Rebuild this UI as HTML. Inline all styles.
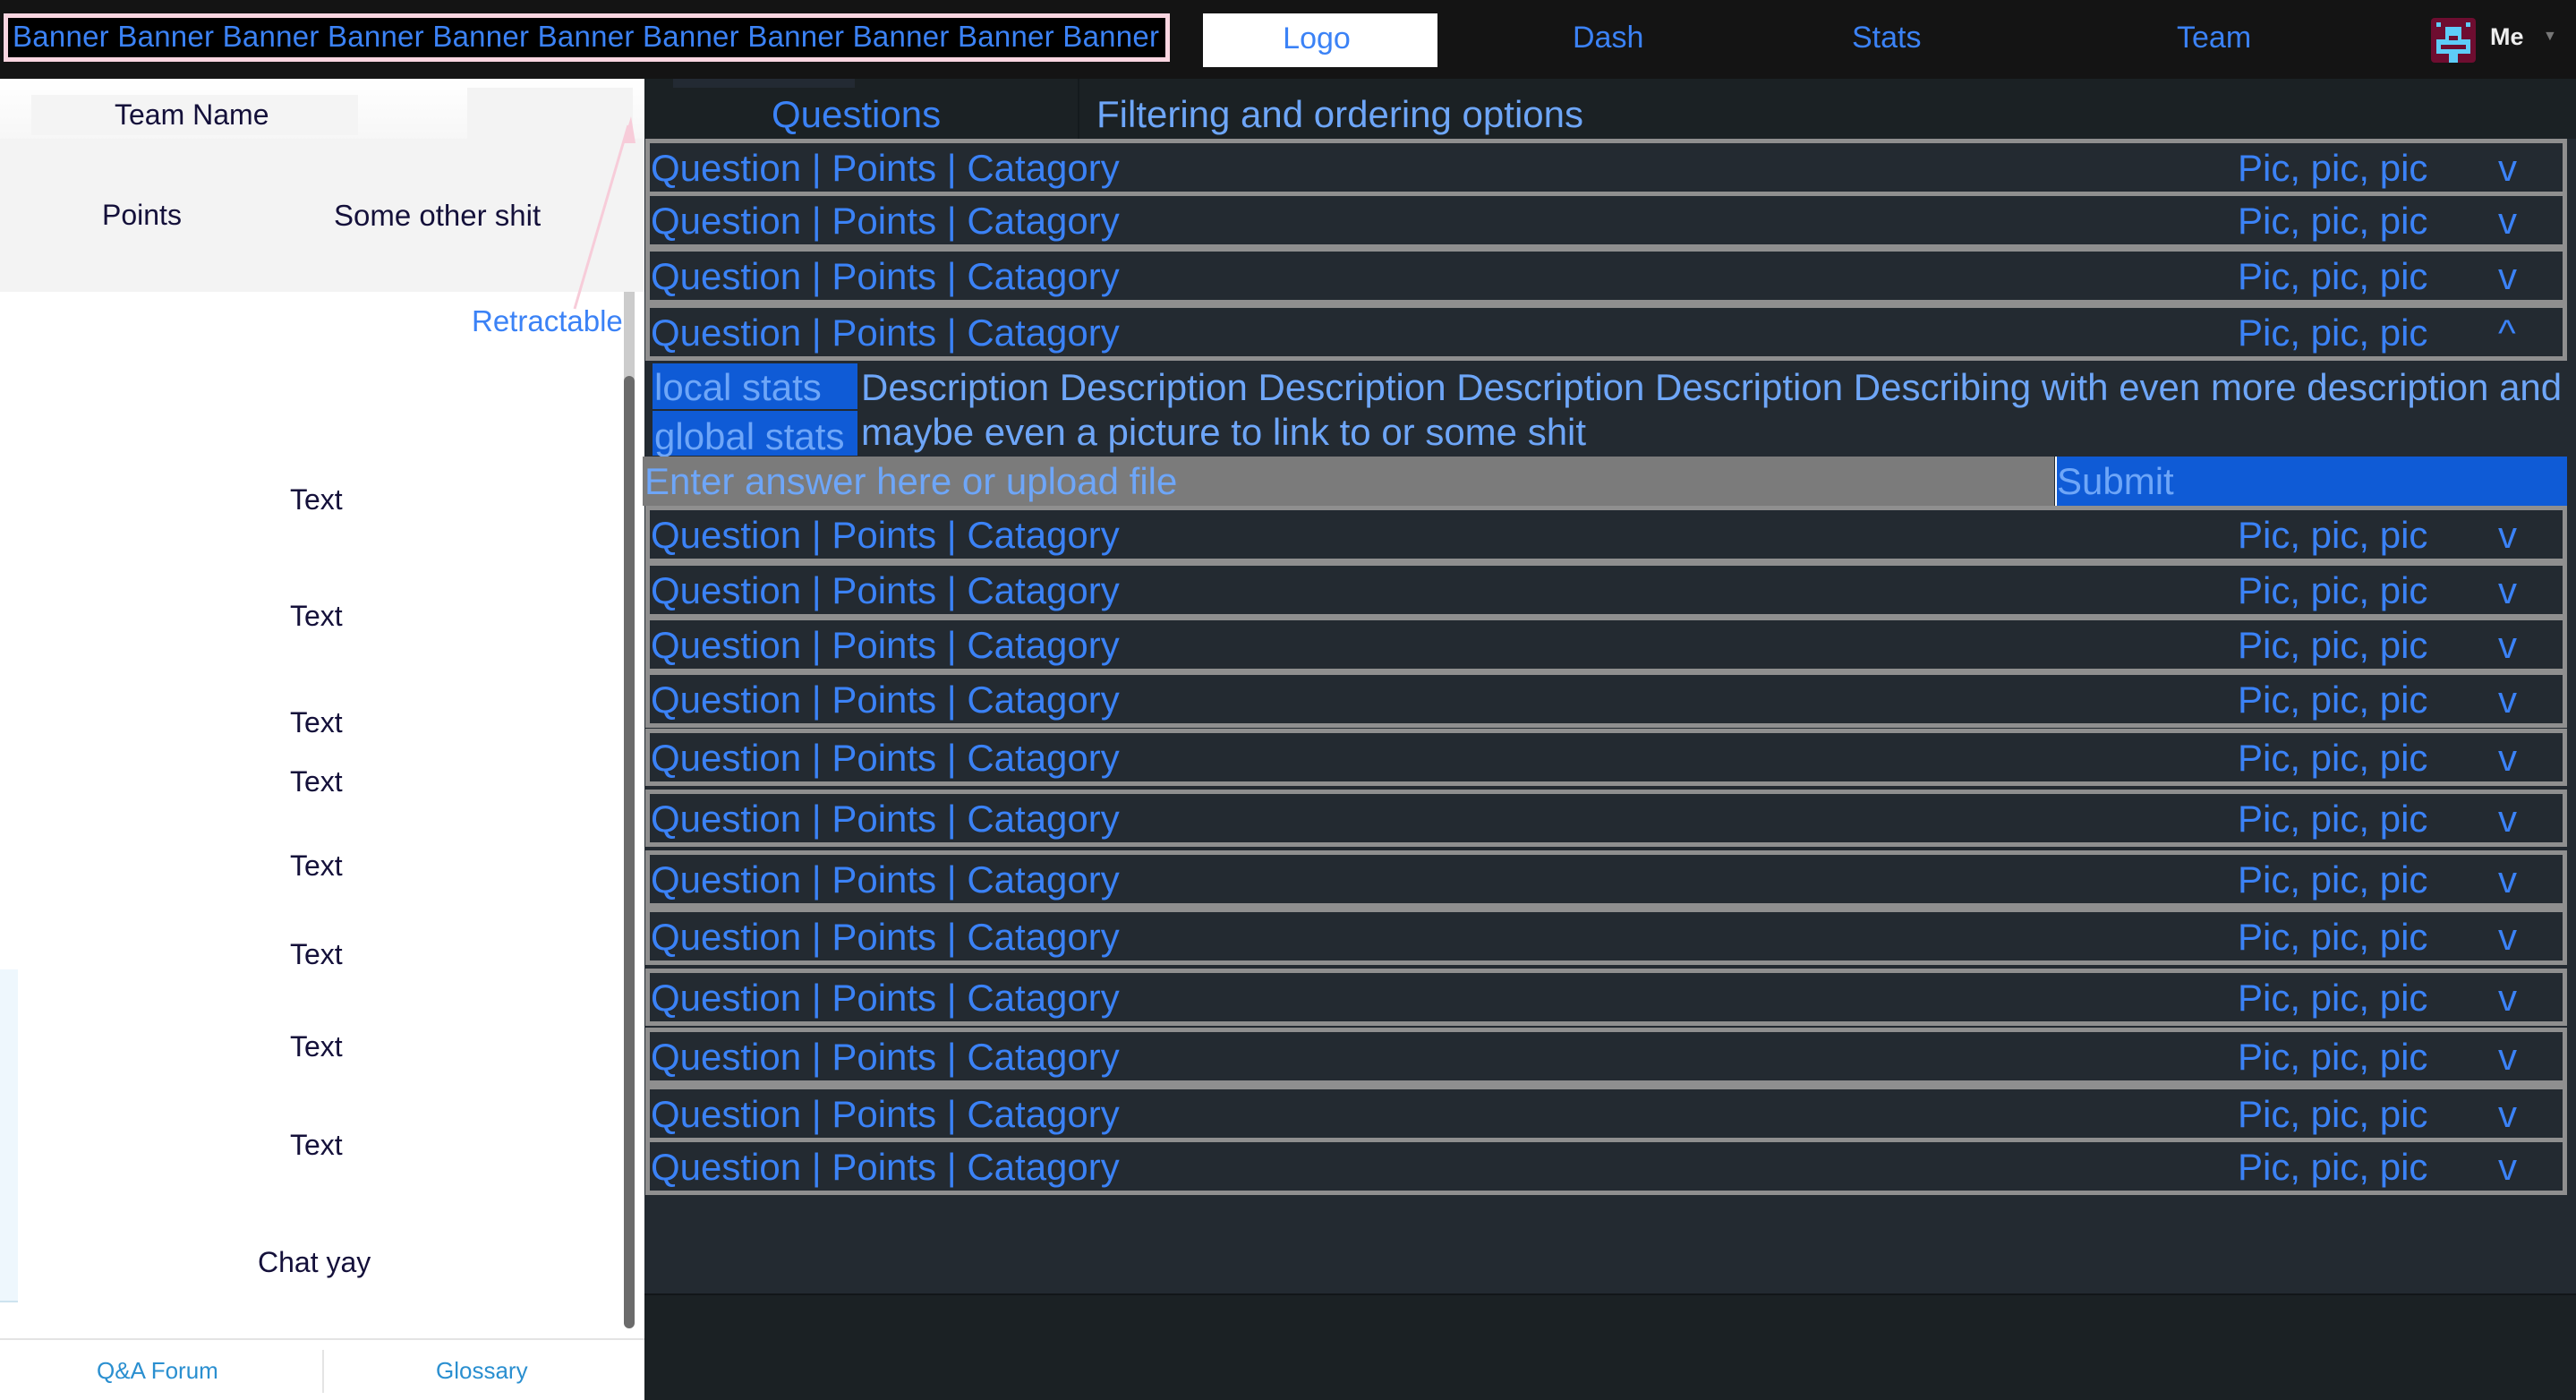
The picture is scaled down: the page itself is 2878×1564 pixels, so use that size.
<!DOCTYPE html>
<html><head><meta charset="utf-8"><style>
*{margin:0;padding:0;box-sizing:border-box}
body{width:2878px;height:1564px;overflow:hidden;background:#1b2124;font-family:"Liberation Sans",sans-serif;position:relative}
.a{position:absolute;white-space:nowrap}
.top{left:0;top:0;width:2878px;height:88px;background:#141414}
.nav{color:#3b82f6;font-size:34px;top:23px}
.left{left:0;top:88px;width:720px;height:1476px;background:#fff}
.dk{color:#14103a;font-size:32px}
.row{position:absolute;left:721px;width:2147px;height:64px;border:5px solid #8f8f8f;background:#232a31;color:#3b82f6;font-size:42px}
.row .q{position:absolute;left:1px;top:4px}
.row .p{position:absolute;left:1774px;top:4px}
.row .v{position:absolute;left:2065px;top:4px}
.lt{color:#6ea6f8;font-size:42px}
</style></head><body>
<div class="a top"></div>
<div class="a" style="left:4px;top:15px;width:1303px;height:54px;border:5px solid #f9d5e0;background:#000;color:#3b82f6;font-size:33px;letter-spacing:0.25px;line-height:42px;padding-left:5px;overflow:hidden">Banner Banner Banner Banner Banner Banner Banner Banner Banner Banner Banner</div>
<div class="a" style="left:1344px;top:15px;width:262px;height:60px;background:#fff;color:#3b82f6;font-size:34px;text-align:center;line-height:56px;padding-right:8px">Logo</div>
<div class="a nav" style="left:1757px">Dash</div>
<div class="a nav" style="left:2069px">Stats</div>
<div class="a nav" style="left:2432px">Team</div>
<svg class="a" style="left:2716px;top:20px" width="50" height="50" viewBox="0 0 50 50"><rect width="50" height="50" rx="4" fill="#6e0d30"/><rect x="6" y="5" width="5" height="5" fill="#5ecdf8"/><rect x="39" y="5" width="5" height="5" fill="#5ecdf8"/><rect x="16" y="10" width="18" height="14" fill="#5ecdf8"/><rect x="6" y="24" width="38" height="16" fill="#5ecdf8"/><rect x="20" y="40" width="10" height="10" fill="#5ecdf8"/><rect x="20" y="20" width="10" height="5" fill="#6e0d30"/><rect x="11" y="30" width="28" height="5" fill="#6e0d30"/></svg>
<div class="a" style="left:2782px;top:26px;color:#eee;font-weight:bold;font-size:27px">Me</div>
<div class="a" style="left:2841px;top:32px;color:#777;font-size:16px">▼</div>

<div class="a left"></div>
<div class="a" style="left:0;top:88px;width:720px;height:238px;background:linear-gradient(#fff,#f3f3f3 40%)"></div>
<div class="a" style="left:35px;top:106px;width:365px;height:45px;background:#f4f4f4"></div>
<div class="a" style="left:522px;top:98px;width:185px;height:57px;background:#f3f3f3"></div>
<div class="a" style="left:0;top:155px;width:720px;height:171px;background:#f3f3f3"></div>
<div class="a dk" style="left:128px;top:110px">Team Name</div>
<div class="a dk" style="left:114px;top:222px">Points</div>
<div class="a dk" style="left:373px;top:222px;font-size:33px">Some other shit</div>
<svg class="a" style="left:620px;top:120px" width="100" height="230"><line x1="22" y1="225" x2="82" y2="20" stroke="#f7ccd9" stroke-width="3"/><polygon points="85,10 76,40 90,40" fill="#f7ccd9"/></svg>
<div class="a" style="left:527px;top:340px;color:#3b82f6;font-size:33px">Retractable</div>
<div class="a" style="left:697px;top:326px;width:12px;height:100px;background:#ccc"></div>
<div class="a" style="left:697px;top:420px;width:12px;height:1064px;background:#6b6b6b;border-radius:6px"></div>
<div class="a" style="left:0;top:1083px;width:20px;height:372px;background:#eef7fd;border-bottom:2px solid #cde3ef"></div>
<div class="a dk" style="left:324px;top:540px">Text</div>
<div class="a dk" style="left:324px;top:670px">Text</div>
<div class="a dk" style="left:324px;top:789px">Text</div>
<div class="a dk" style="left:324px;top:855px">Text</div>
<div class="a dk" style="left:324px;top:949px">Text</div>
<div class="a dk" style="left:324px;top:1048px">Text</div>
<div class="a dk" style="left:324px;top:1151px">Text</div>
<div class="a dk" style="left:324px;top:1261px">Text</div>
<div class="a dk" style="left:288px;top:1392px">Chat yay</div>
<div class="a" style="left:0;top:1495px;width:720px;height:2px;background:#e4e4e4"></div>
<div class="a" style="left:360px;top:1508px;width:2px;height:48px;background:#e4e4e4"></div>
<div class="a" style="left:108px;top:1516px;color:#2a8fd0;font-size:26px">Q&amp;A Forum</div>
<div class="a" style="left:487px;top:1516px;color:#2a8fd0;font-size:26px">Glossary</div>

<div class="a" style="left:720px;top:155px;width:2158px;height:1290px;background:#232a31"></div>
<div class="a" style="left:752px;top:88px;width:203px;height:10px;background:#232a33"></div>
<div class="a" style="left:1204px;top:88px;width:2px;height:67px;background:#141a1d"></div>
<div class="a" style="left:862px;top:104px;color:#3b82f6;font-size:42px">Questions</div>
<div class="a" style="left:1225px;top:104px;color:#6ea6f8;font-size:42px">Filtering and ordering options</div>

<div class="row" style="top:155px"><span class="q">Question | Points | Catagory</span><span class="p">Pic, pic, pic</span><span class="v">v</span></div>
<div class="row" style="top:214px"><span class="q">Question | Points | Catagory</span><span class="p">Pic, pic, pic</span><span class="v">v</span></div>
<div class="row" style="top:276px"><span class="q">Question | Points | Catagory</span><span class="p">Pic, pic, pic</span><span class="v">v</span></div>
<div class="row" style="top:339px"><span class="q">Question | Points | Catagory</span><span class="p">Pic, pic, pic</span><span class="v">^</span></div>

<div class="a" style="left:729px;top:406px;width:229px;height:51px;background:#0f5bd6"></div>
<div class="a" style="left:729px;top:459px;width:229px;height:50px;background:#0f5bd6"></div>
<div class="a lt" style="left:731px;top:409px">local stats</div>
<div class="a lt" style="left:731px;top:464px">global stats</div>
<div class="a lt" style="left:962px;top:409px">Description Description Description Description Description Describing with even more description and</div>
<div class="a lt" style="left:962px;top:459px">maybe even a picture to link to or some shit</div>
<div class="a" style="left:718px;top:510px;width:1577px;height:55px;background:#7b7b7b"></div>
<div class="a" style="left:2296px;top:510px;width:572px;height:55px;background:#0f5bd6;border-left:2px solid #fff"></div>
<div class="a lt" style="left:720px;top:514px">Enter answer here or upload file</div>
<div class="a lt" style="left:2298px;top:514px">Submit</div>

<div class="row" style="top:565px"><span class="q">Question | Points | Catagory</span><span class="p">Pic, pic, pic</span><span class="v">v</span></div>
<div class="row" style="top:627px"><span class="q">Question | Points | Catagory</span><span class="p">Pic, pic, pic</span><span class="v">v</span></div>
<div class="row" style="top:688px"><span class="q">Question | Points | Catagory</span><span class="p">Pic, pic, pic</span><span class="v">v</span></div>
<div class="row" style="top:749px"><span class="q">Question | Points | Catagory</span><span class="p">Pic, pic, pic</span><span class="v">v</span></div>
<div class="row" style="top:814px"><span class="q">Question | Points | Catagory</span><span class="p">Pic, pic, pic</span><span class="v">v</span></div>
<div class="row" style="top:882px"><span class="q">Question | Points | Catagory</span><span class="p">Pic, pic, pic</span><span class="v">v</span></div>
<div class="row" style="top:950px"><span class="q">Question | Points | Catagory</span><span class="p">Pic, pic, pic</span><span class="v">v</span></div>
<div class="row" style="top:1014px"><span class="q">Question | Points | Catagory</span><span class="p">Pic, pic, pic</span><span class="v">v</span></div>
<div class="row" style="top:1082px"><span class="q">Question | Points | Catagory</span><span class="p">Pic, pic, pic</span><span class="v">v</span></div>
<div class="row" style="top:1148px"><span class="q">Question | Points | Catagory</span><span class="p">Pic, pic, pic</span><span class="v">v</span></div>
<div class="row" style="top:1212px"><span class="q">Question | Points | Catagory</span><span class="p">Pic, pic, pic</span><span class="v">v</span></div>
<div class="row" style="top:1271px"><span class="q">Question | Points | Catagory</span><span class="p">Pic, pic, pic</span><span class="v">v</span></div>
<div class="a" style="left:720px;top:1445px;width:2158px;height:2px;background:#121619"></div>
</body></html>
